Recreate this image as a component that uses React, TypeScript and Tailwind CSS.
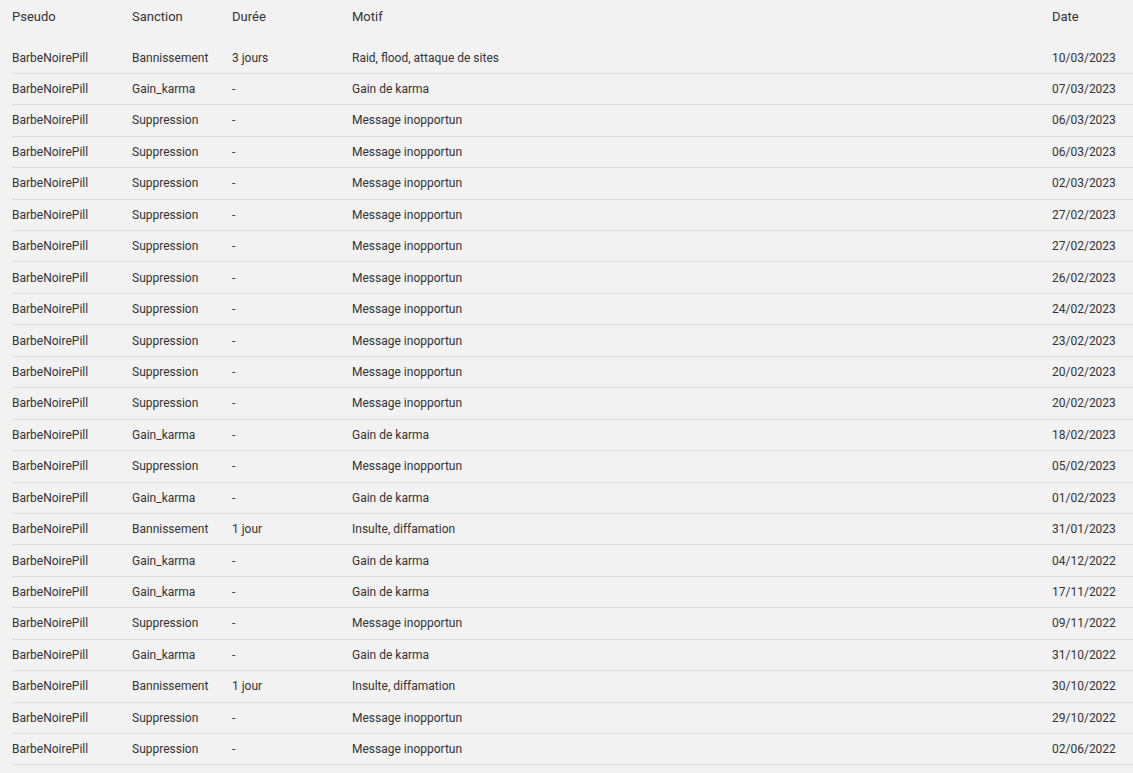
import React from "react";

const rows: [string, string, string, string][] = [
  ["Bannissement", "3 jours", "Raid, flood, attaque de sites", "10/03/2023"],
  ["Gain_karma", "-", "Gain de karma", "07/03/2023"],
  ["Suppression", "-", "Message inopportun", "06/03/2023"],
  ["Suppression", "-", "Message inopportun", "06/03/2023"],
  ["Suppression", "-", "Message inopportun", "02/03/2023"],
  ["Suppression", "-", "Message inopportun", "27/02/2023"],
  ["Suppression", "-", "Message inopportun", "27/02/2023"],
  ["Suppression", "-", "Message inopportun", "26/02/2023"],
  ["Suppression", "-", "Message inopportun", "24/02/2023"],
  ["Suppression", "-", "Message inopportun", "23/02/2023"],
  ["Suppression", "-", "Message inopportun", "20/02/2023"],
  ["Suppression", "-", "Message inopportun", "20/02/2023"],
  ["Gain_karma", "-", "Gain de karma", "18/02/2023"],
  ["Suppression", "-", "Message inopportun", "05/02/2023"],
  ["Gain_karma", "-", "Gain de karma", "01/02/2023"],
  ["Bannissement", "1 jour", "Insulte, diffamation", "31/01/2023"],
  ["Gain_karma", "-", "Gain de karma", "04/12/2022"],
  ["Gain_karma", "-", "Gain de karma", "17/11/2022"],
  ["Suppression", "-", "Message inopportun", "09/11/2022"],
  ["Gain_karma", "-", "Gain de karma", "31/10/2022"],
  ["Bannissement", "1 jour", "Insulte, diffamation", "30/10/2022"],
  ["Suppression", "-", "Message inopportun", "29/10/2022"],
  ["Suppression", "-", "Message inopportun", "02/06/2022"],
];

export default function App() {
  return (
    <div
      className="w-[1133px] h-[773px] bg-[#f2f2f2] text-[#333333] overflow-hidden pl-3"
      style={{ fontFamily: "Roboto, 'Liberation Sans', sans-serif" }}
    >
      <div className="grid grid-cols-[120px_100px_120px_1fr_81px] h-[42.4px] pt-[7px] text-[13px] leading-[20px]">
        <div>Pseudo</div>
        <div>Sanction</div>
        <div>Durée</div>
        <div>Motif</div>
        <div>Date</div>
      </div>
      {rows.map((r, i) => (
        <div
          key={i}
          className="grid grid-cols-[120px_100px_120px_1fr_81px] h-[31.45px] items-center border-b border-[#dcdcdc] text-[12px]"
        >
          <div>BarbeNoirePill</div>
          <div>{r[0]}</div>
          <div>{r[1]}</div>
          <div>{r[2]}</div>
          <div>{r[3]}</div>
        </div>
      ))}
    </div>
  );
}
